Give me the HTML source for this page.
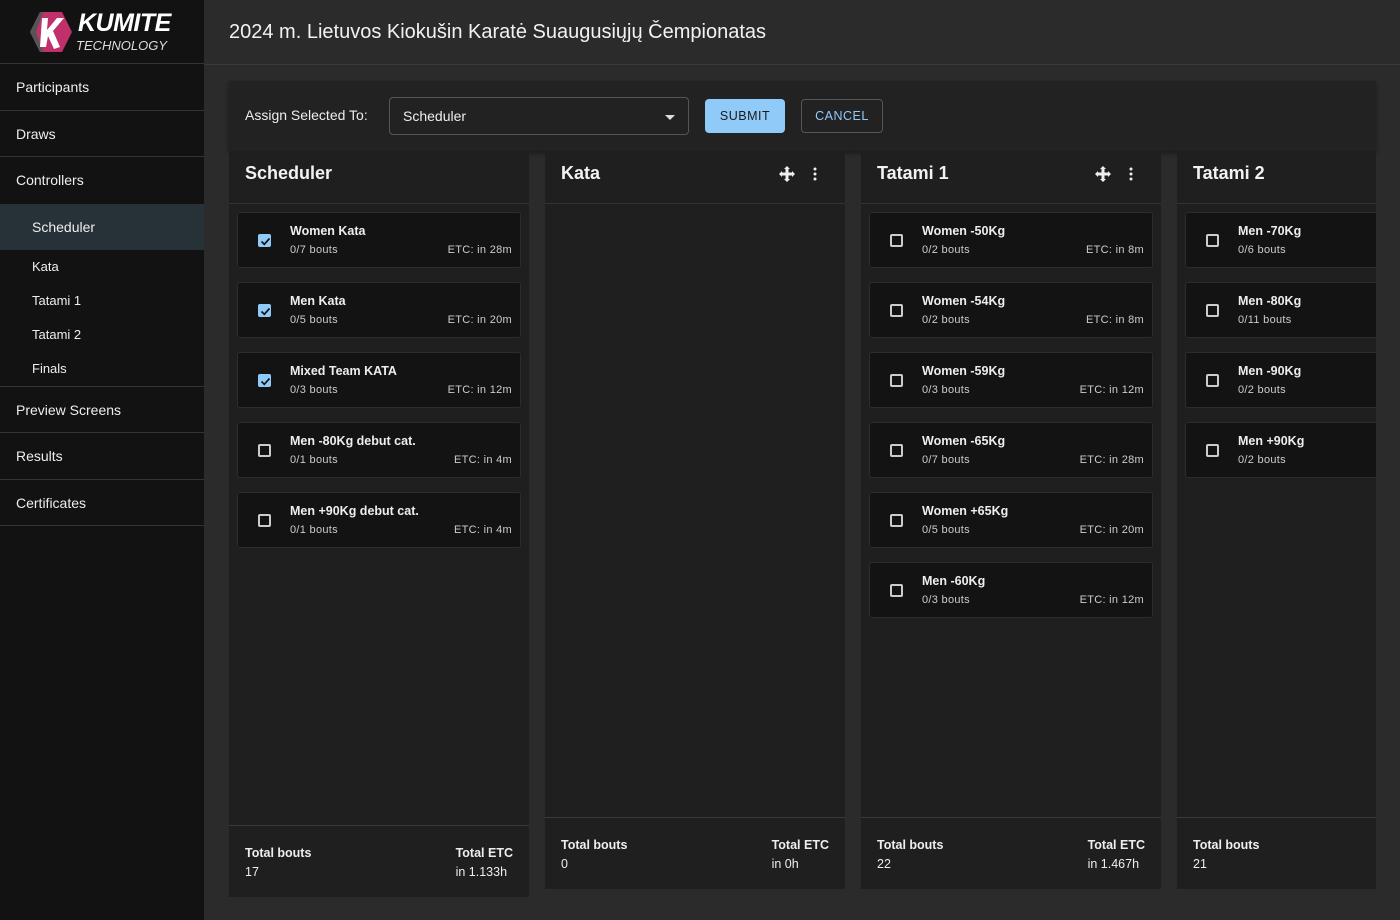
<!DOCTYPE html>
<html><head><meta charset="utf-8"><style>
*{box-sizing:border-box;margin:0;padding:0}
body{width:1400px;height:920px;background:#2b2b2b;font-family:"Liberation Sans",sans-serif;color:#eee;position:relative;overflow:hidden}
.side{position:absolute;left:0;top:0;width:204px;height:920px;background:#121212}
.logo{height:64px;border-bottom:1px solid #333;position:relative}
.nav{font-size:14px;color:#eee}
.nav .i{height:46.5px;line-height:46px;padding-left:16px;border-bottom:1px solid #333}
.nav .s{height:34px;line-height:34px;padding-left:32px;font-size:13px}
.nav .sel{background:#263238;height:46px;line-height:46px;font-size:14px}
.top{position:absolute;left:204px;top:0;right:0;height:65px;border-bottom:1px solid #3a3a3a;background:#2b2b2b}
.top h1{font-weight:normal;font-size:20px;position:absolute;left:25px;top:21px;color:#f2f2f2}
.tool{position:absolute;left:229px;top:81px;width:1147px;height:70px;background:#222;box-shadow:0 2px 4px rgba(0,0,0,.4)}
.col{position:absolute;top:151px;width:300px;background:#1f1f1f}
.ch{height:53px;border-bottom:1px solid #333;font-size:18px;padding:12px 16px;font-weight:bold;color:#f2f2f2;position:relative}
.card{position:absolute;left:8px;width:284px;height:56px;background:#131313;border:1px solid #2c2c2c;border-radius:3px}
.card .cb{position:absolute;left:20px;top:21px;width:13px;height:13px;border:2px solid #ccc;border-radius:2px}
.card .cb.on{background:#90caf9;border-color:#90caf9}
.card .cb.on svg{position:absolute;left:-1px;top:-1px}
.card .t{position:absolute;left:52px;top:11px;font-size:12.5px;font-weight:bold;color:#eee}
.card .b{position:absolute;left:52px;top:31px;font-size:11px;color:#ccc;letter-spacing:.3px}
.card .e{position:absolute;right:8px;top:31px;font-size:11px;color:#ccc;letter-spacing:.3px}
.ft{position:absolute;left:0;right:0;bottom:0;height:72px;border-top:1px solid #3a3a3a;font-size:12.5px}
.ft .l{position:absolute;left:16px;top:18px;line-height:19px}
.ft .r{position:absolute;right:16px;top:18px;line-height:19px}
.ft b{color:#eee}
.icons{position:absolute;top:15px;right:16px}
</style></head><body>
<div class="side">
 <div class="logo">
  <svg style="position:absolute;left:29px;top:11px" width="44" height="42" viewBox="0 0 44 42"><polygon points="11,1 33,1 43,21 33,41 11,41 1,21" fill="#c0306a"/><polygon points="1,21 11,1 14,1 7,21 14,41 11,41" fill="#555"/><path d="M13 7 L19 7 L18 19 L28 7 L35 7 L24 20 L31 36 L25 38 L19 25 L17 36 L11 36 Z" fill="#fff"/></svg>
  <div style="position:absolute;left:78px;top:9px;font-size:25px;font-weight:bold;font-style:italic;color:#fff;letter-spacing:-.5px">KUMITE</div>
  <div style="position:absolute;left:76px;top:38px;font-size:13px;font-style:italic;color:#ddd;letter-spacing:0">TECHNOLOGY</div>
 </div>
 <div class="nav">
  <div class="i">Participants</div>
  <div class="i">Draws</div>
  <div class="i" style="border:0">Controllers</div>
  <div class="s sel">Scheduler</div>
  <div class="s">Kata</div>
  <div class="s">Tatami 1</div>
  <div class="s">Tatami 2</div>
  <div class="s" style="border-bottom:1px solid #333;height:35px">Finals</div>
  <div class="i">Preview Screens</div>
  <div class="i">Results</div>
  <div class="i">Certificates</div>
 </div>
</div>
<div class="top"><h1>2024 m. Lietuvos Kiokušin Karatė Suaugusiųjų Čempionatas</h1></div>
<div class="tool">
 <div style="position:absolute;left:16px;top:26px;font-size:14px">Assign Selected To:</div>
 <div style="position:absolute;left:160px;top:16px;width:300px;height:38px;border:1px solid #555;border-radius:4px;font-size:14px;padding:10px 13px">Scheduler<div style="position:absolute;right:13px;top:17px;border-left:5px solid transparent;border-right:5px solid transparent;border-top:5px solid #ddd"></div></div>
 <div style="position:absolute;left:476px;top:18px;width:80px;height:34px;background:#90caf9;border-radius:4px;color:#1a1a1a;font-size:12.5px;text-align:center;line-height:34px;letter-spacing:.5px">SUBMIT</div>
 <div style="position:absolute;left:572px;top:18px;width:82px;height:34px;border:1px solid #555;border-radius:4px;color:#90caf9;font-size:12.5px;text-align:center;line-height:32px;letter-spacing:.5px">CANCEL</div>
</div>

<div class="col" style="left:229px;height:746px">
 <div class="ch">Scheduler</div>
 <div class="card" style="top:61px"><div class="cb on"><svg width="13" height="13" viewBox="0 0 13 13"><path d="M2.5 6.5 L5.3 9.3 L10.5 3.5" stroke="#111" stroke-width="1.7" fill="none"/></svg></div><div class="t">Women Kata</div><div class="b">0/7 bouts</div><div class="e">ETC: in 28m</div></div>
 <div class="card" style="top:131px"><div class="cb on"><svg width="13" height="13" viewBox="0 0 13 13"><path d="M2.5 6.5 L5.3 9.3 L10.5 3.5" stroke="#111" stroke-width="1.7" fill="none"/></svg></div><div class="t">Men Kata</div><div class="b">0/5 bouts</div><div class="e">ETC: in 20m</div></div>
 <div class="card" style="top:201px"><div class="cb on"><svg width="13" height="13" viewBox="0 0 13 13"><path d="M2.5 6.5 L5.3 9.3 L10.5 3.5" stroke="#111" stroke-width="1.7" fill="none"/></svg></div><div class="t">Mixed Team KATA</div><div class="b">0/3 bouts</div><div class="e">ETC: in 12m</div></div>
 <div class="card" style="top:271px"><div class="cb"></div><div class="t">Men -80Kg debut cat.</div><div class="b">0/1 bouts</div><div class="e">ETC: in 4m</div></div>
 <div class="card" style="top:341px"><div class="cb"></div><div class="t">Men +90Kg debut cat.</div><div class="b">0/1 bouts</div><div class="e">ETC: in 4m</div></div>
 <div class="ft"><div class="l"><b>Total bouts</b><br>17</div><div class="r"><b>Total ETC</b><br>in 1.133h</div></div>
</div>

<div class="col" style="left:545px;height:738px">
 <div class="ch">Kata<svg class="icons" width="50" height="16" viewBox="0 0 50 16"><path d="M8 0 L11 3 L5 3 Z M8 16 L11 13 L5 13 Z M0 8 L3 5 L3 11 Z M16 8 L13 5 L13 11 Z M6.5 3 H9.5 V13 H6.5 Z M3 6.5 H13 V9.5 H3 Z" fill="#eee"/><circle cx="36" cy="3" r="1.5" fill="#eee"/><circle cx="36" cy="8" r="1.5" fill="#eee"/><circle cx="36" cy="13" r="1.5" fill="#eee"/></svg></div>
 <div class="ft"><div class="l"><b>Total bouts</b><br>0</div><div class="r"><b>Total ETC</b><br>in 0h</div></div>
</div>

<div class="col" style="left:861px;height:738px">
 <div class="ch">Tatami 1<svg class="icons" width="50" height="16" viewBox="0 0 50 16"><path d="M8 0 L11 3 L5 3 Z M8 16 L11 13 L5 13 Z M0 8 L3 5 L3 11 Z M16 8 L13 5 L13 11 Z M6.5 3 H9.5 V13 H6.5 Z M3 6.5 H13 V9.5 H3 Z" fill="#eee"/><circle cx="36" cy="3" r="1.5" fill="#eee"/><circle cx="36" cy="8" r="1.5" fill="#eee"/><circle cx="36" cy="13" r="1.5" fill="#eee"/></svg></div>
 <div class="card" style="top:61px"><div class="cb"></div><div class="t">Women -50Kg</div><div class="b">0/2 bouts</div><div class="e">ETC: in 8m</div></div>
 <div class="card" style="top:131px"><div class="cb"></div><div class="t">Women -54Kg</div><div class="b">0/2 bouts</div><div class="e">ETC: in 8m</div></div>
 <div class="card" style="top:201px"><div class="cb"></div><div class="t">Women -59Kg</div><div class="b">0/3 bouts</div><div class="e">ETC: in 12m</div></div>
 <div class="card" style="top:271px"><div class="cb"></div><div class="t">Women -65Kg</div><div class="b">0/7 bouts</div><div class="e">ETC: in 28m</div></div>
 <div class="card" style="top:341px"><div class="cb"></div><div class="t">Women +65Kg</div><div class="b">0/5 bouts</div><div class="e">ETC: in 20m</div></div>
 <div class="card" style="top:411px"><div class="cb"></div><div class="t">Men -60Kg</div><div class="b">0/3 bouts</div><div class="e">ETC: in 12m</div></div>
 <div class="ft"><div class="l"><b>Total bouts</b><br>22</div><div class="r"><b>Total ETC</b><br>in 1.467h</div></div>
</div>

<div class="col" style="left:1177px;height:738px;width:199px;overflow:hidden">
 <div class="ch">Tatami 2</div>
 <div class="card" style="top:61px"><div class="cb"></div><div class="t">Men -70Kg</div><div class="b">0/6 bouts</div></div>
 <div class="card" style="top:131px"><div class="cb"></div><div class="t">Men -80Kg</div><div class="b">0/11 bouts</div></div>
 <div class="card" style="top:201px"><div class="cb"></div><div class="t">Men -90Kg</div><div class="b">0/2 bouts</div></div>
 <div class="card" style="top:271px"><div class="cb"></div><div class="t">Men +90Kg</div><div class="b">0/2 bouts</div></div>
 <div class="ft"><div class="l"><b>Total bouts</b><br>21</div></div>
</div>
</body></html>
